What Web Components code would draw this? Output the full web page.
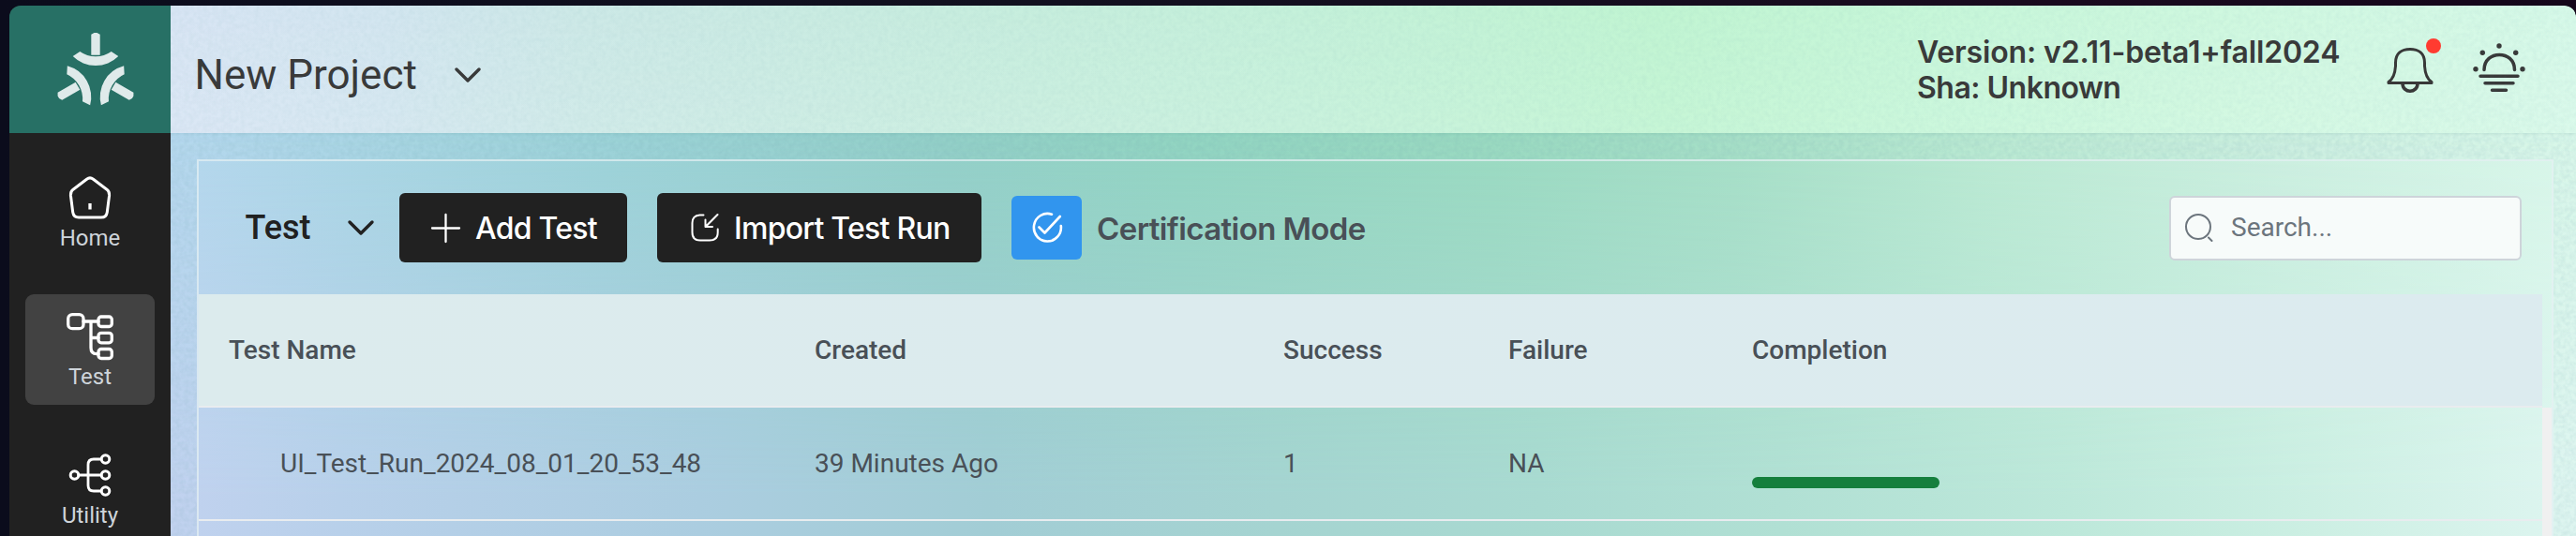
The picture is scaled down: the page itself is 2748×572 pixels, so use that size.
<!DOCTYPE html>
<html lang="en">
<head>
<meta charset="utf-8">
<title>Test Harness</title>
<style>
  body { margin: 0; height: 572px; overflow: hidden; background: linear-gradient(90deg, #0b0c1c, #11101f 40%, #190a1e 80%, #14061a); font-family: Roboto, sans-serif; }
</style>
</head>
<body>
<th-app></th-app>
<script>
const define = (name, html, setup) => {
  const t = document.createElement('template');
  t.innerHTML = html;
  customElements.define(name, class extends HTMLElement {
    connectedCallback() {
      if (this.shadowRoot) return;
      this.attachShadow({ mode: 'open' }).appendChild(t.content.cloneNode(true));
      if (setup) setup(this, this.shadowRoot);
    }
  });
};

/* One of the three arms of the logo, drawn around the origin */
const ARM = 'M-4.700-22V-44L-1.500-45.800H1.500L4.700-44V-22ZM-24.300-20.800L-16.700-25.800A29 29 0 0 0 16.700-25.800L24.300-20.800A34.500 34.500 0 0 1-24.300-20.800Z';

const ICONS = {
  logo: ['-40 -44.8 80 80', `<g fill="#dfeaea" stroke="none"><path d="${ARM}"/><path d="${ARM}" transform="rotate(120)"/><path d="${ARM}" transform="rotate(240)"/></g>`],
  chevron: ['0 0 28 18', '<path d="M2 3L14 15L26 3"/>'],
  home: ['0 0 44 46', '<path d="M18.500 3.200Q22 .5 25.500 3.200L40 14.200Q43 16.600 42.600 20.500L40.300 38.500Q39.500 44 34 44H10Q4.500 44 3.700 38.500L1.400 20.500Q1 16.600 4 14.200Z"/><path d="M22 29V35.500" stroke-linecap="butt" stroke-width="3.300"/>'],
  tree: ['0 0 50 50', '<rect x="1.700" y="1.700" width="16.300" height="15" rx="4.500"/><rect x="34" y="4" width="14.300" height="10.500" rx="3"/><rect x="34" y="21.300" width="14.300" height="10.500" rx="3"/><rect x="34" y="38.500" width="14.300" height="10" rx="3"/><path d="M18 9H34M26 9V37Q26 43.700 32 43.700H34M26 26.500H34"/>'],
  nodes: ['0 0 44 46', '<circle cx="5.500" cy="23" r="4.300"/><circle cx="38.500" cy="6" r="4.300"/><circle cx="38.500" cy="23" r="4.300"/><circle cx="38.500" cy="40" r="4.300"/><path d="M9.800 23H34M34 6H26Q20 6 20 12V34Q20 40 26 40H34" stroke-width="2.800"/>'],
  plus: ['0 0 31 31', '<path d="M15.500 1V30M1 15.500H30" stroke-width="2.300"/>'],
  import: ['0 0 30 30', '<path d="M13.500 1.500H9.500Q1.500 2 1.500 10V20Q1.500 28.500 10 28.500H20Q28.700 28.500 28.700 20V16.500M28.500 1L15.800 13.700M15.500 6.500V14H23"/>'],
  check: ['0 0 32 32', '<path d="M21 1.700A14.500 14.800 0 1 0 30.800 14M7.500 15.500L13.500 21.500L29.800 4"/>'],
  search: ['0 0 30 30', '<circle cx="14" cy="14" r="13"/><path d="M25 25.500L28.500 29"/>'],
  bell: ['0 0 50 50', '<path d="M2 37.500C7.500 34 9 28 9.500 20.500V17C9.500 7 16 2.500 25 2.500S40.500 7 40.500 17V20.500C41 28 42.500 34 48 37.500V38.500H2Z" stroke-width="3"/><path d="M17 39C17 50 33 50 33 39"/>'],
  sun: ['0 0 56 54', '<g stroke-width="3.500"><path d="M12 28.500C12 7 44.500 7 44.500 28.500"/><path d="M8 35.300H48M13 42.800H43M20.500 50.300H35.500"/></g><g fill="#383838" stroke="none"><circle cx="28" cy="3" r="2.700"/><circle cx="10.300" cy="10.300" r="2.700"/><circle cx="45.700" cy="10.300" r="2.700"/><circle cx="3" cy="27.700" r="2.700"/><circle cx="53" cy="27.700" r="2.700"/></g>']
};

define('th-icon', `<style>
  :host { display: block; flex: none; width: var(--w); height: var(--h); }
  svg { display: block; width: 100%; height: 100%; overflow: visible; }
</style><svg fill="none" stroke="currentColor" stroke-linecap="round" stroke-linejoin="round"></svg>`, (el, root) => {
  const [box, body] = ICONS[el.getAttribute('name')];
  const svg = root.querySelector('svg');
  svg.setAttribute('viewBox', box);
  svg.setAttribute('stroke-width', el.getAttribute('stroke') || 3);
  svg.innerHTML = body;
  const [, , w, h] = box.split(' ');
  el.style.setProperty('--w', w + 'px');
  el.style.setProperty('--h', h + 'px');
});

/* Fine paper-like grain laid over the wallpaper */
define('th-grain', `<style>
  :host { display: block; position: absolute; inset: 0; opacity: var(--grain, .1); pointer-events: none; }
  svg { display: block; width: 100%; height: 100%; }
</style><svg><filter id="n" x="0" y="0" width="100%" height="100%"><feTurbulence type="fractalNoise" baseFrequency=".2" numOctaves="2" seed="4"/><feColorMatrix values="0 0 0 0 .15  0 0 0 0 .35  0 0 0 0 .4  1.8 1.2 0 0 -1.1"/></filter><rect width="100%" height="100%" filter="url(#n)"/></svg>`);

define('th-nav-item', `<style>
  :host { display: flex; flex-direction: column; align-items: center; box-sizing: border-box; width: 138px; height: 118px; flex: none; padding-top: 22px; border-radius: 9px; color: #fff; }
  :host([active]) { background: #424242; }
  .ic { height: 54px; display: flex; align-items: flex-start; }
  :host([active]) .ic { margin-top: -2px; height: 56px; }
  span { font-size: 24px; line-height: 28px; color: #ced4da; margin-top: -2px; }
</style><div class="ic"><slot name="icon"></slot></div><span><slot></slot></span>`);

define('th-sidebar', `<style>
  :host { display: flex; flex-direction: column; width: 172px; flex: none; background: #212121; }
  .brand { flex: none; height: 136px; background: #277065; display: flex; justify-content: center; padding: 30px 0 0 12px; box-sizing: border-box; }
  nav { display: flex; flex-direction: column; gap: 30px; padding: 24px 17px; }
</style>
<div class="brand"><th-icon name="logo"></th-icon></div>
<nav>
  <th-nav-item><th-icon slot="icon" name="home"></th-icon>Home</th-nav-item>
  <th-nav-item active><th-icon slot="icon" name="tree" stroke="3.300"></th-icon>Test</th-nav-item>
  <th-nav-item><th-icon slot="icon" name="nodes" stroke="3"></th-icon>Utility</th-nav-item>
</nav>`);

define('th-header', `<style>
  :host { display: flex; flex: none; position: relative; box-sizing: border-box; height: 136px; padding: 0 54px 0 25.500px; color: #383838;
    background: linear-gradient(180deg, #fff0, #ffffff18), linear-gradient(90deg, #d8e5f4, #d3e6f0 9%, #cde9e7 17%, #c8eddf 32%, #c5f1da 47%, #c1f5d2 62%, #c8f7da 75%, #cff8df 85%, #d7f9e9); border-top-right-radius: 12px; box-shadow: 0 1px 3px #00505018; }
  h1 { margin: 0; font: 400 44px/52px Roboto, sans-serif; padding-top: 48px; }
  .chev { padding: 65px 0 0 40px; }
  .info { margin-left: auto; padding-top: 31px; font: 600 32px/38px Inter, sans-serif; width: 501px; }
  .info div { white-space: nowrap; }
  .v { letter-spacing: -.15px; }
  .s { letter-spacing: -.5px; }
  .bell { position: relative; padding-top: 44px; }
  .dot { position: absolute; left: 42px; top: 35px; width: 16px; height: 16px; border-radius: 50%; background: #ff3b30; }
  .sun { padding: 40px 0 0 42px; }
</style>
<th-grain style="--grain:.06"></th-grain>
<h1>New Project</h1><div class="chev"><th-icon name="chevron" stroke="3.400"></th-icon></div>
<div class="info"><div class="v">Version: v2.11-beta1+fall2024</div><div class="s">Sha: Unknown</div></div>
<div class="bell"><th-icon name="bell" stroke="3.600"></th-icon><i class="dot"></i></div>
<div class="sun"><th-icon name="sun"></th-icon></div>`);

define('th-button', `<style>
  :host { display: flex; align-items: center; box-sizing: border-box; height: 74px; border-radius: 6px; background: #212121; color: #fff; font: 500 32px/40px Inter, sans-serif; letter-spacing: -.75px; white-space: nowrap; }
  span { padding-top: 2px; }
</style><slot name="icon"></slot><span><slot></slot></span>`);

define('th-search', `<style>
  :host { display: flex; align-items: center; box-sizing: border-box; width: 376px; height: 69px; padding-left: 15px; gap: 19px; border: 2px solid #ced4da; border-radius: 6px; background: #f7fbfa; color: #6c757d; font: 400 28px/34px Roboto, sans-serif; }
</style><th-icon name="search" stroke="2"></th-icon><span><slot></slot></span>`);

define('th-toolbar', `<style>
  :host { display: flex; align-items: center; height: 142px; padding: 0 32px 0 49.500px; box-sizing: border-box; }
  h2 { margin: 0; width: 109.500px; font: 500 36px/44px Roboto, sans-serif; color: #212121; }
  .c { color: #212121; width: 55px; }
  .add { width: 243px; padding-left: 34px; margin-right: 32px; gap: 16px; }
  .imp { width: 346px; padding-left: 36px; margin-right: 32px; gap: 16px; }
  .cert { width: 75px; height: 68px; border-radius: 6px; background: #3195ee; display: flex; align-items: center; justify-content: center; color: #fff; }
  .mode { margin-left: 16px; padding-top: 2px; font: 600 33px/40px Inter, sans-serif; letter-spacing: -.6px; color: #495057; white-space: nowrap; }
  th-search { margin-left: auto; }
</style>
<h2>Test</h2><div class="c"><th-icon name="chevron" stroke="3.400"></th-icon></div>
<th-button class="add"><th-icon slot="icon" name="plus"></th-icon>Add Test</th-button>
<th-button class="imp"><th-icon slot="icon" name="import" stroke="2"></th-icon>Import Test Run</th-button>
<div class="cert"><th-icon name="check" stroke="2.600"></th-icon></div><span class="mode">Certification Mode</span>
<th-search>Search...</th-search>`);

define('th-row', `<style>
  :host { display: grid; grid-template-columns: 625px 500px 240px 260px 1fr; align-items: center; box-sizing: border-box; width: 2500px; height: 121px; padding-left: 32px; border-bottom: 2px solid #e9ecef; color: #495057; font: 400 28px/34px Roboto, sans-serif; }
  :host([head]) { background: linear-gradient(90deg, #dcebed, #dcebee 40%, #dcebef); font-weight: 500; }
  ::slotted(.name) { padding-left: 55px; }
</style><slot></slot>`);

define('th-progress', `<style>
  :host { display: block; width: 200px; height: 12px; border-radius: 6px; background: #157f3d; margin-top: 41px; }
</style>`);

define('th-panel', `<style>
  :host { display: block; box-sizing: border-box; width: 2514px; margin: 28px 0 0 28px; height: 500px; border: 2px solid #e4f0f2b8; position: relative; overflow: hidden; }
  .body { display: flex; }
  .bar { width: 10px; height: 300px; background: #f0f0f0; }
</style>
<th-toolbar></th-toolbar>
<th-row head><span>Test Name</span><span>Created</span><span>Success</span><span>Failure</span><span>Completion</span></th-row>
<div class="body"><div>
<th-row><span class="name">UI_Test_Run_2024_08_01_20_53_48</span><span>39 Minutes Ago</span><span>1</span><span>NA</span><th-progress></th-progress></th-row>
</div><div class="bar"></div></div>`);

define('th-wall', `<style>
  :host { display: block; position: absolute; inset: 0; background: linear-gradient(90deg, #b5d8ee, #a9d6e4 8%, #9cd3d8 18%, #93d0c8 32%, #92d5c2 42%, #9adac1 55%, #a6dfc7 65%, #bbead3 76%, #ccefe0 88%, #d9f7ea); }
  div { position: absolute; inset: 0; background: linear-gradient(90deg, #c1d2ef, #b8d0ea 7%, #abcde0 22%, #a2cdd5 34%, #a5d4d1 46%, #a9dad1 57%, #b1e0d4 67%, #bde8da 79%, #ccefe3 89%, #def5f0); -webkit-mask: linear-gradient(180deg, #0000, #000 90%); mask: linear-gradient(180deg, #0000, #000 90%); }
</style><div></div>`);

define('th-app', `<style>
  :host { display: flex; height: 566px; margin: 6px 0 0 10px; border-radius: 12px 12px 0 0; overflow: hidden; }
  main { flex: 1; min-width: 0; display: flex; flex-direction: column; }
  .content { flex: 1; min-height: 0; position: relative; overflow: hidden; }
  /* grain is visible only in the margin round the panel */
  .edge { position: absolute; inset: 0; clip-path: polygon(0 0, 100% 0, 100% 100%, 2542px 100%, 2542px 29px, 28px 29px, 28px 100%, 0 100%); }
  th-header { z-index: 1; }
</style>
<th-sidebar></th-sidebar>
<main><th-header></th-header><div class="content"><th-wall></th-wall><div class="edge"><th-grain style="--grain:.11"></th-grain></div><th-panel></th-panel></div></main>`);
</script>
</body>
</html>
